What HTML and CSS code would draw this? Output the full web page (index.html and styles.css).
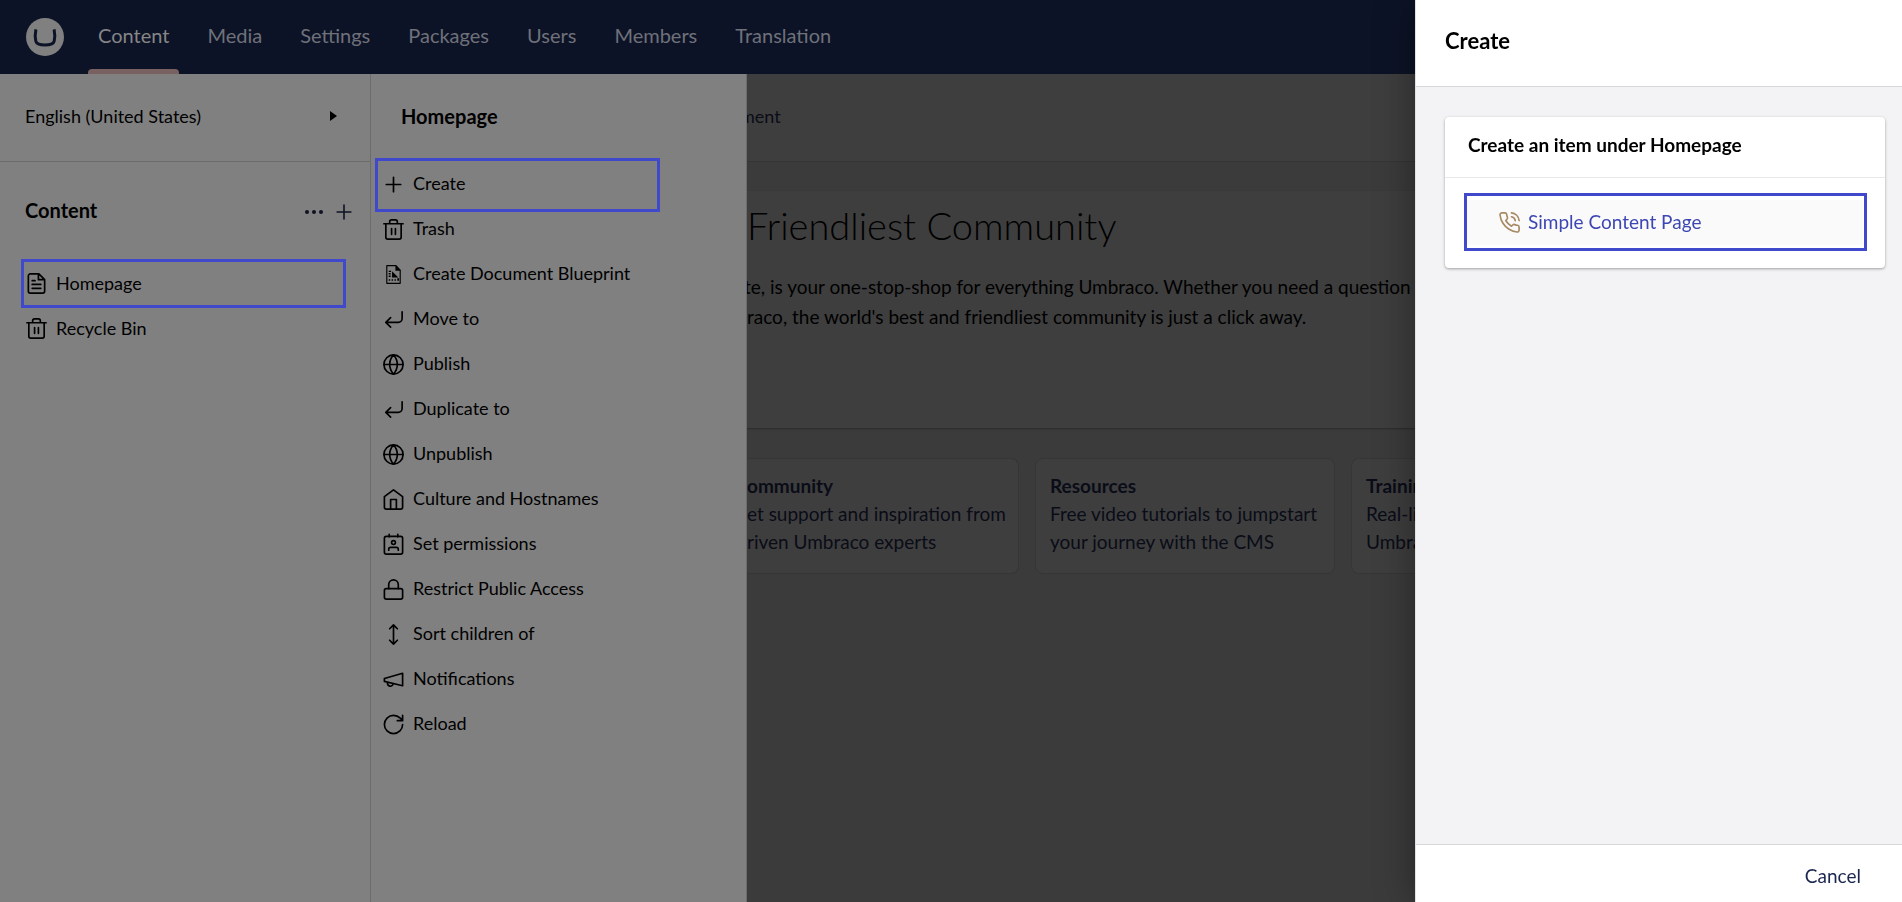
FILE: index.html
```html
<!DOCTYPE html>
<html lang="en">
<head>
<meta charset="utf-8">
<title>Umbraco – Content</title>
<link rel="stylesheet" href="styles.css">
</head>
<body>
<svg class="sprite" aria-hidden="true">
  <symbol id="i-plus" viewBox="0 0 24 24"><path d="M4.500 12h15M12 4.500v15"/></symbol>
  <symbol id="i-trash" viewBox="0 0 24 24"><path d="M2 6h20M20 6v14a2 2 0 0 1-2 2H6a2 2 0 0 1-2-2V6M8 6V4a2 2 0 0 1 2-2h4a2 2 0 0 1 2 2v2M10 11v6M14 11v6"/></symbol>
  <symbol id="i-file" viewBox="0 0 24 24"><path d="M14.500 2H5.500a2 2 0 0 0-2 2v16a2 2 0 0 0 2 2h13a2 2 0 0 0 2-2V8zM14 2v6h6.500M16.500 13h-9M16.500 17h-9M10.500 9h-3"/></symbol>
  <symbol id="i-blueprint" viewBox="0 0 24 24"><path d="M5 2.800h9.500L19 7.500v13.700H5z" stroke-width="1.200"/><path class="solid" d="M14 2.500h1L19.500 8H14zM10.500 8.500l6.500 6.500h-6.500zM7 8h2.500v1.500H7zM7 10.500h2v1.500H7zM7 13h2v1.500H7zM7 17h1.500v1.500H7zM10 17h1.500v1.500H10zM13 17h1.500v1.500H13zM16 16h1.800v2.500H16z"/></symbol>
  <symbol id="i-return" viewBox="0 0 24 24"><path d="M9 10l-5 5 5 5M21 4v7a4 4 0 0 1-4 4H4"/></symbol>
  <symbol id="i-globe" viewBox="0 0 24 24"><circle cx="12" cy="12" r="10"/><path d="M2 12h20M12 2a15.300 15.300 0 0 1 4 10 15.300 15.300 0 0 1-4 10 15.300 15.300 0 0 1-4-10 15.300 15.300 0 0 1 4-10z"/></symbol>
  <symbol id="i-home" viewBox="0 0 24 24"><path d="M2.500 9l9.500-7 9.500 7v11a2 2 0 0 1-2 2h-15a2 2 0 0 1-2-2zM9 22V12h6v10"/></symbol>
  <symbol id="i-contact" viewBox="0 0 24 24"><path d="M7.500 1.500V4M16.500 1.500V4M7 18v-1a2 2 0 0 1 2-2h6a2 2 0 0 1 2 2v1"/><rect x="2.500" y="3.500" width="19" height="18.500" rx="2"/><circle cx="12" cy="10" r="2"/></symbol>
  <symbol id="i-lock" viewBox="0 0 24 24"><rect x="2.500" y="11" width="19" height="11" rx="2"/><path d="M7 11V7a5 5 0 0 1 10 0v4"/></symbol>
  <symbol id="i-sort" viewBox="0 0 24 24"><path d="M8 6l4-4 4 4M8 18l4 4 4-4M12 2v20"/></symbol>
  <symbol id="i-megaphone" viewBox="0 0 24 24"><path d="M2.500 11l19-5.500v13L2.500 14zM11.600 16.800a3 3 0 1 1-5.800-1.600"/></symbol>
  <symbol id="i-reload" viewBox="0 0 24 24"><path d="M21.500 12a9.500 9.500 0 1 1-9.500-9.500c2.700 0 5.200 1.100 7.100 2.900L21.500 8M21.500 2.500V8H16"/></symbol>
  <symbol id="i-phone" viewBox="0 0 24 24"><path d="M22 16.920v3a2 2 0 0 1-2.180 2 19.790 19.790 0 0 1-8.630-3.070 19.500 19.500 0 0 1-6-6 19.790 19.790 0 0 1-3.070-8.670A2 2 0 0 1 4.110 2h3a2 2 0 0 1 2 1.720c.127.960.361 1.903.7 2.810a2 2 0 0 1-.45 2.110L8.090 9.910a16 16 0 0 0 6 6l1.270-1.270a2 2 0 0 1 2.110-.45c.907.339 1.850.573 2.810.7A2 2 0 0 1 22 16.920zM14.050 2a9 9 0 0 1 8 7.940M14.050 6A5 5 0 0 1 18 10"/></symbol>
</svg>

<div class="app">
  <header class="topbar">
    <a class="logo" href="#" aria-label="Umbraco">
      <svg viewBox="0 0 38 38"><circle class="logo-disc" cx="19" cy="19" r="19"/><path class="logo-mark" d="M9.900 11.400C9 16 9 20 9.800 23.200c.7 2.900 3 3.800 9.200 3.800s8.500-.9 9.200-3.800c.8-3.200.8-7.200-.1-11.800"/></svg>
    </a>
    <nav class="sections">
      <a class="active" href="#">Content</a>
      <a href="#">Media</a>
      <a href="#">Settings</a>
      <a href="#">Packages</a>
      <a href="#">Users</a>
      <a href="#">Members</a>
      <a href="#">Translation</a>
    </nav>
  </header>

  <div class="body">
    <aside class="sidebar">
      <button class="language" type="button"><span>English (United States)</span><svg class="caret" viewBox="0 0 7 10"><path d="M0 0l7 5-7 5z"/></svg></button>
      <div class="tree-head">
        <h2>Content</h2>
        <button type="button" aria-label="Actions"><svg class="dots" viewBox="0 0 18 4"><circle cx="2" cy="2" r="2"/><circle cx="9" cy="2" r="2"/><circle cx="16" cy="2" r="2"/></svg></button>
        <button type="button" aria-label="Create"><svg class="icon small"><use href="#i-plus"/></svg></button>
      </div>
      <nav class="tree">
        <a class="marked" href="#"><svg class="icon"><use href="#i-file"/></svg><span>Homepage</span></a>
        <a href="#"><svg class="icon"><use href="#i-trash"/></svg><span>Recycle Bin</span></a>
      </nav>
    </aside>

    <section class="menu">
      <h2>Homepage</h2>
      <button class="marked" type="button"><svg class="icon"><use href="#i-plus"/></svg><span>Create</span></button>
      <button type="button"><svg class="icon"><use href="#i-trash"/></svg><span>Trash</span></button>
      <button type="button"><svg class="icon"><use href="#i-blueprint"/></svg><span>Create Document Blueprint</span></button>
      <button type="button"><svg class="icon"><use href="#i-return"/></svg><span>Move to</span></button>
      <button type="button"><svg class="icon"><use href="#i-globe"/></svg><span>Publish</span></button>
      <button type="button"><svg class="icon"><use href="#i-return"/></svg><span>Duplicate to</span></button>
      <button type="button"><svg class="icon"><use href="#i-globe"/></svg><span>Unpublish</span></button>
      <button type="button"><svg class="icon"><use href="#i-home"/></svg><span>Culture and Hostnames</span></button>
      <button type="button"><svg class="icon"><use href="#i-contact"/></svg><span>Set permissions</span></button>
      <button type="button"><svg class="icon"><use href="#i-lock"/></svg><span>Restrict Public Access</span></button>
      <button type="button"><svg class="icon"><use href="#i-sort"/></svg><span>Sort children of</span></button>
      <button type="button"><svg class="icon"><use href="#i-megaphone"/></svg><span>Notifications</span></button>
      <button type="button"><svg class="icon"><use href="#i-reload"/></svg><span>Reload</span></button>
    </section>

    <main class="workspace">
      <nav class="dash-tabs"><a href="#">ment</a></nav>
      <div class="dash">
        <section class="intro">
          <h1>Friendliest Community</h1>
          <p>te, is your one-stop-shop for everything Umbraco. Whether you need a question answered,<br>raco, the world's best and friendliest community is just a click away.</p>
        </section>
        <div class="cards">
          <a href="#"><b>ommunity</b><span>et support and inspiration from</span><span>riven Umbraco experts</span></a>
          <a href="#"><b>Resources</b><span>Free video tutorials to jumpstart your journey with the CMS</span></a>
          <a href="#"><b>Training</b><span>Real-life training and official Umbraco certifications</span></a>
        </div>
      </div>
    </main>
  </div>
</div>

<div class="drawer" role="dialog" aria-labelledby="drawer-title">
  <header><h2 id="drawer-title">Create</h2></header>
  <div class="drawer-body">
    <section class="box">
      <h3>Create an item under Homepage</h3>
      <div class="box-body">
        <button class="marked" type="button"><svg class="icon"><use href="#i-phone"/></svg><span>Simple Content Page</span></button>
      </div>
    </section>
  </div>
  <footer><button type="button">Cancel</button></footer>
</div>
</body>
</html>
```
FILE: styles.css
```css
* { box-sizing: border-box; }

body {
  margin: 0;
  font-family: Lato, sans-serif;
  font-size: 18px;
  line-height: 24px;
  color: #000;
  overflow: hidden;
}

h1, h2, h3, p { margin: 0; }
a { color: inherit; text-decoration: none; }

button {
  margin: 0;
  padding: 0;
  border: 0;
  background: none;
  font: inherit;
  color: inherit;
  text-align: left;
  cursor: pointer;
}

.sprite { position: absolute; width: 0; height: 0; }

.icon {
  flex: none;
  width: 23px;
  height: 23px;
  fill: none;
  stroke: currentColor;
  stroke-width: 1.75;
  stroke-linecap: round;
  stroke-linejoin: round;
}
.icon + span { padding-bottom: 2px; }
.icon.small { width: 22px; height: 22px; }
.solid { fill: currentColor; stroke: none; }

.marked { position: relative; }
.marked::after {
  content: "";
  position: absolute;
  border: 3px solid #4048cc;
  pointer-events: none;
}

.app { display: flex; flex-direction: column; height: 100vh; }

.topbar {
  flex: none;
  display: flex;
  align-items: center;
  height: 74px;
  padding: 0 26px;
  background: #0d1327;
}
.logo, .logo svg { display: block; width: 38px; height: 38px; }
.logo-disc { fill: #808080; }
.logo-mark { fill: none; stroke: #0d1327; stroke-width: 3; }

.sections {
  display: flex;
  gap: 18px;
  height: 100%;
  margin-left: 24px;
  font-size: 20px;
  line-height: 70px;
  color: #6f717a;
}
.sections a { position: relative; padding: 0 10px; }
.sections .active { color: #868686; }
.sections .active::after {
  content: "";
  position: absolute;
  inset: auto 0 0;
  height: 5px;
  border-radius: 4px 4px 0 0;
  background: #7a6161;
}

.body { display: flex; flex: 1; min-height: 0; }

.sidebar {
  flex: none;
  width: 371px;
  background: #808080;
  border-right: 1px solid #6c6c6c;
}
.language {
  display: flex;
  justify-content: space-between;
  align-items: center;
  width: 100%;
  height: 88px;
  padding: 0 33px 3px 25px;
  border-bottom: 1px solid #6c6c6c;
}
.caret { width: 7px; height: 10px; }
.tree-head {
  display: flex;
  align-items: center;
  gap: 10px;
  height: 99px;
  padding: 0 15px 0 25px;
  color: #0e1222;
}
.tree-head h2 { flex: 1; padding-bottom: 4px; font-size: 20px; color: #000; }
.tree-head button { display: flex; }
.dots { width: 18px; height: 4px; fill: currentColor; }
.tree { padding: 0 24px 0 25px; }
.tree a {
  display: flex;
  align-items: center;
  gap: 8px;
  height: 45px;
}
.tree .marked::after { inset: -2px 0 -2px -4px; }

.menu {
  flex: none;
  width: 376px;
  background: #808080;
  border-right: 1px solid #6c6c6c;
}
.menu h2 {
  height: 88px;
  padding-left: 30px;
  font-size: 20px;
  line-height: 84px;
}
.menu button {
  display: flex;
  align-items: center;
  gap: 8px;
  width: 100%;
  height: 45px;
  padding-left: 11px;
}
.menu .icon + span { padding-bottom: 4px; }
.menu .marked::after { inset: -4px 86px -5px 4px; }

.workspace {
  flex: 1;
  min-width: 0;
  background: #3b3b3b;
  overflow: hidden;
}
.dash-tabs {
  height: 88px;
  line-height: 84px;
  text-indent: -7px;
  background: #3e3e3e;
  border-bottom: 1px solid #353535;
  color: #0a0c17;
}
.dash { display: grid; gap: 30px; padding: 29px 30px 30px 0; }
.intro {
  min-height: 237px;
  padding-top: 11px;
  background: #3e3e3e;
  border-radius: 0 4px 4px 0;
  box-shadow: 0 1px 2px #2a2a2a;
}
.intro h1 { font-size: 38px; font-weight: 300; line-height: 46px; }
.intro p {
  margin-top: 24px;
  font-size: 19px;
  line-height: 30px;
  text-indent: -3px;
  white-space: nowrap;
}
.cards {
  display: grid;
  grid-template-columns: 272px 300px 300px;
  gap: 16px;
  font-size: 19px;
  line-height: 28px;
  color: #0a0c17;
}
.cards a {
  height: 116px;
  padding: 13px 14px;
  background: #3e3e3e;
  border: 1px solid #363636;
  border-radius: 8px;
}
.cards a:first-child {
  padding-left: 0;
  border-left: 0;
  border-radius: 0 8px 8px 0;
  white-space: nowrap;
}
.cards b, .cards span { display: block; }

.drawer {
  position: fixed;
  inset: 0 0 0 auto;
  display: flex;
  flex-direction: column;
  width: 487px;
  background: #f3f3f5;
  border-left: 1px solid #e2e2e4;
  box-shadow: 0 0 36px rgba(0, 0, 0, .4);
}
.drawer header {
  height: 87px;
  padding-left: 29px;
  background: #fff;
  border-bottom: 1px solid #d8d7d9;
  line-height: 82px;
}
.drawer h2 { font-size: 22px; line-height: inherit; }
.drawer-body { flex: 1; padding: 30px 17px 30px 29px; }
.box {
  background: #fff;
  border-radius: 4px;
  box-shadow: 0 1px 3px rgba(0, 0, 0, .35);
}
.box h3 {
  height: 61px;
  padding-left: 23px;
  border-bottom: 1px solid #e9e9eb;
  font-size: 19px;
  line-height: 55px;
}
.box-body { padding: 22px 22px 23px; }
.box-body button {
  display: flex;
  align-items: center;
  gap: 7px;
  width: 100%;
  height: 45px;
  padding-left: 31px;
  background: #fafafa;
  color: #3d47b3;
  font-size: 19px;
}
.box-body .icon { color: #a78a63; }
.box-body .marked::after { inset: -7px -4px -6px -3px; }
.drawer footer {
  display: flex;
  justify-content: flex-end;
  align-items: center;
  height: 58px;
  padding: 5px 41px 0 0;
  background: #fff;
  border-top: 1px solid #d8d7d9;
  color: #1b264f;
  font-size: 19px;
}
```
